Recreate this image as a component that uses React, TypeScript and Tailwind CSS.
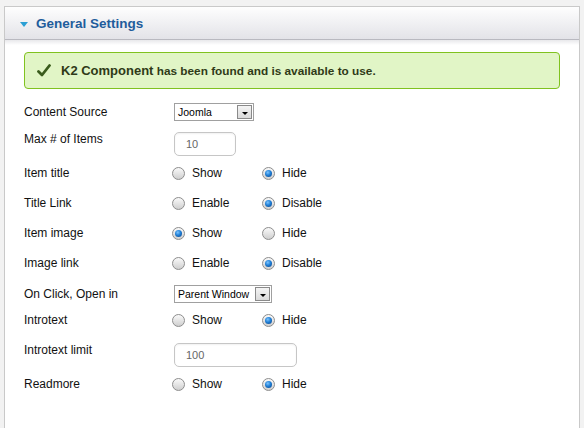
const font = { fontFamily: '"Liberation Sans", Arial, sans-serif' };

function Radio({ checked }: { checked?: boolean }) {
  return (
    <span className="relative inline-flex h-[13px] w-[13px] shrink-0 items-center justify-center rounded-full border border-[#8d8d8d] bg-gradient-to-b from-[#fafafa] to-[#cfcfcf]">
      {checked && (
        <span className="h-[7px] w-[7px] rounded-full bg-[radial-gradient(circle_at_40%_35%,#7cc4ff_0%,#1f7fd6_45%,#0b3f82_100%)]" />
      )}
    </span>
  );
}

function RadioPair({ a, b, value }: { a: string; b: string; value: 0 | 1 }) {
  return (
    <div className="-ml-[2px] flex items-center">
      <label className="flex w-[90px] items-center gap-[7px]">
        <Radio checked={value === 0} />
        <span className="text-[12px] text-[#111]">{a}</span>
      </label>
      <label className="flex items-center gap-[7px]">
        <Radio checked={value === 1} />
        <span className="text-[12px] text-[#111]">{b}</span>
      </label>
    </div>
  );
}

function Select({ value, width }: { value: string; width: string }) {
  return (
    <div className={`flex h-[18px] items-center border border-[#a0a0a0] bg-white ${width}`}>
      <span className="flex-1 pl-[3px] text-[10.5px] leading-none text-black">{value}</span>
      <span className="mr-[1px] flex h-[14px] w-[15px] items-center justify-center border border-[#8a8a8a] bg-gradient-to-b from-[#f4f4f4] to-[#dadada]">
        <span className="mt-[2px] h-0 w-0 border-x-[3px] border-t-[3px] border-x-transparent border-t-black" />
      </span>
    </div>
  );
}

function TextBox({ value, width }: { value: string; width: string }) {
  return (
    <div className={`flex h-[24px] items-center rounded-[5px] border border-[#c6c6c6] bg-white pl-[11px] shadow-[inset_0_1px_2px_rgba(0,0,0,0.06)] ${width}`}>
      <span className="text-[11px] text-[#666]">{value}</span>
    </div>
  );
}

type Row = { label: string; mt: string; control: React.ReactNode; top?: boolean };

const rows: Row[] = [
  { label: 'Content Source', mt: 'mt-[11px]', control: <Select value="Joomla" width="w-[80px]" /> },
  { label: 'Max # of Items', mt: 'mt-[8px]', control: <TextBox value="10" width="w-[62px]" />, top: true },
  { label: 'Item title', mt: 'mt-[5px]', control: <RadioPair a="Show" b="Hide" value={1} /> },
  { label: 'Title Link', mt: 'mt-[6px]', control: <RadioPair a="Enable" b="Disable" value={1} /> },
  { label: 'Item image', mt: 'mt-[6px]', control: <RadioPair a="Show" b="Hide" value={0} /> },
  { label: 'Image link', mt: 'mt-[6px]', control: <RadioPair a="Enable" b="Disable" value={1} /> },
  { label: 'On Click, Open in', mt: 'mt-[7px]', control: <Select value="Parent Window" width="w-[98px]" /> },
  { label: 'Introtext', mt: 'mt-[2px]', control: <RadioPair a="Show" b="Hide" value={1} /> },
  { label: 'Introtext limit', mt: 'mt-[11px]', control: <TextBox value="100" width="w-[123px]" />, top: true },
  { label: 'Readmore', mt: 'mt-[5px]', control: <RadioPair a="Show" b="Hide" value={1} /> },
];

export default function App() {
  return (
    <div className="h-[428px] w-full overflow-hidden bg-[#f2f2f2] pl-[4px] pt-[6px]" style={font}>
      <div className="h-[440px] w-[576px] border border-[#c9c9c9] bg-white">
        {/* Header */}
        <div className="flex h-[33px] items-center border-b border-[#b9b9c0] bg-gradient-to-b from-[#fefefe] to-[#e3e3e8] pl-[15px] pt-[2px]">
          <span className="mr-[8px] mt-[1px] h-0 w-0 border-x-[4px] border-t-[5px] border-x-transparent border-t-[#2b9fd4]" />
          <h2 className="text-[13.5px] font-bold text-[#1f5d9c]">General Settings</h2>
        </div>
        <div className="h-[5px] bg-gradient-to-b from-[#e8e8eb] to-white" />

        <div className="px-[19px]">
          {/* Success message */}
          <div className="mt-[7px] flex h-[37px] items-center rounded-[4px] border border-[#80c21f] bg-[#e1f5c6] pl-[12px]">
            <svg width="14" height="13" viewBox="0 0 14 13" className="mr-[10px]">
              <path d="M1.5 7.5 L5 11 L12.5 1.5" fill="none" stroke="#3a5c1c" strokeWidth="2.8" strokeLinecap="round" strokeLinejoin="round" />
            </svg>
            <p className="text-[11.8px] font-bold text-[#2f3a17]">
              <span className="text-[13px]">K2 Component</span> has been found and is available to use.
            </p>
          </div>

          {/* Form */}
          {rows.map((r) => (
            <div key={r.label} className={`flex h-[24px] ${r.top ? 'items-start' : 'items-center'} ${r.mt}`}>
              <span className="w-[150px] shrink-0 text-[12px] leading-[14px] text-[#111]">{r.label}</span>
              {r.control}
            </div>
          ))}
        </div>
      </div>
    </div>
  );
}
